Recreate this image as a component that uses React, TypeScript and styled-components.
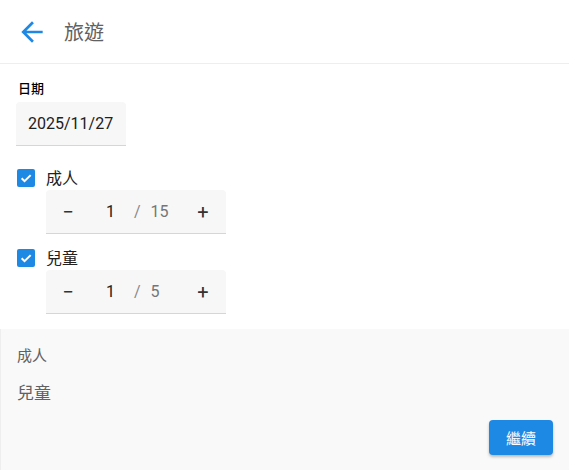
import React from "react";
import styled, { createGlobalStyle } from "styled-components";

const Global = createGlobalStyle`
  html, body { margin: 0; padding: 0; background: #fff; }
  body { font-family: Roboto, "Noto Sans CJK TC", sans-serif; color: #212121; }
`;

const Page = styled.div`
  width: 569px;
  height: 470px;
  display: flex;
  flex-direction: column;
  overflow: hidden;
`;

const Header = styled.header`
  flex: 0 0 64px;
  height: 64px;
  box-sizing: border-box;
  border-bottom: 1px solid #eeeeee;
  display: flex;
  align-items: center;
  padding-left: 16px;
  gap: 16px;
`;

const Title = styled.h1`
  margin: 0;
  font-size: 20px;
  font-weight: 400;
  color: #616161;
`;

const Form = styled.div`
  flex: 1 1 auto;
  padding: 16px 16px 0;
  display: flex;
  flex-direction: column;
`;

const Label = styled.div`
  font-size: 13px;
  font-weight: 500;
  color: #000;
  margin-left: 2px;
  line-height: 18px;
  margin-bottom: 4px;
`;

const Field = styled.div<{ $w: number }>`
  flex-shrink: 0;
  width: ${(p) => p.$w}px;
  height: 44px;
  box-sizing: border-box;
  background: #f7f7f7;
  border-radius: 4px 4px 0 0;
  border-bottom: 1px solid #d6d6d6;
  display: flex;
  align-items: center;
`;

const DateText = styled.span`
  font-size: 16px;
  padding-left: 12px;
  color: #212121;
`;

const CheckRow = styled.div<{ $top: number }>`
  flex-shrink: 0;
  display: flex;
  align-items: center;
  margin-top: ${(p) => p.$top}px;
  height: 24px;
`;

const Box = styled.span`
  width: 18px;
  height: 18px;
  border-radius: 2px;
  background: #1e88e5;
  margin-left: 1px;
  display: flex;
  align-items: center;
  justify-content: center;
`;

const CheckLabel = styled.span`
  font-size: 16px;
  margin-left: 11px;
  margin-bottom: 2px;
  color: #212121;
`;

const Stepper = styled(Field)`
  margin-left: 30px;
`;

const StepBtn = styled.span<{ $w: number }>`
  width: ${(p) => p.$w}px;
  text-align: center;
  font-size: 20px;
  color: #333;
`;

const Count = styled.span`
  font-size: 16px;
  color: #212121;
  width: 25px;
  text-align: right;
`;

const Slash = styled.span`
  font-size: 16px;
  color: #888;
  margin: 0 10px 0 19px;
`;

const Max = styled.span`
  font-size: 16px;
  color: #757575;
  flex: 1;
`;

const Summary = styled.section`
  flex: 0 0 141px;
  height: 141px;
  box-sizing: border-box;
  background: #f9f9f9;
  border-left: 1px solid #eeeeee;
  padding: 17px 16px 17px 16px;
  display: flex;
  flex-direction: column;
`;

const SumLine = styled.div<{ $size: number }>`
  font-size: ${(p) => p.$size}px;
  color: #616161;
  line-height: 20px;
  height: 20px;
  margin-bottom: 17px;
`;

const Actions = styled.div`
  margin-top: auto;
  display: flex;
  justify-content: flex-end;
`;

const Button = styled.button`
  width: 64px;
  height: 35px;
  border: none;
  border-radius: 4px;
  background: #1e88e5;
  color: #fff;
  font-family: Roboto, "Noto Sans CJK TC", sans-serif;
  font-size: 15px;
  box-shadow: 0 2px 3px rgba(0, 0, 0, 0.25);
  padding: 0;
`;

const IconSvg = styled.svg`
  flex-shrink: 0;
  display: block;
`;

const Check = () => (
  <svg width="14" height="14" viewBox="0 0 24 24">
    <path d="M4.5 12.5l5 5L20 7" fill="none" stroke="#fff" strokeWidth="3.4" />
  </svg>
);

const Arrow = () => (
  <IconSvg width="32" height="32" viewBox="0 0 24 24">
    <path d="M20 11H7.83l5.59-5.59L12 4l-8 8 8 8 1.41-1.41L7.83 13H20v-2z" fill="#1e88e5" />
  </IconSvg>
);

const StepperRow = ({ max }: { max: number }) => (
  <Stepper $w={180}>
    <StepBtn $w={44}>−</StepBtn>
    <Count>1</Count>
    <Slash>/</Slash>
    <Max>{max}</Max>
    <StepBtn $w={46}>+</StepBtn>
  </Stepper>
);

export default function App() {
  return (
    <Page>
      <Global />
      <Header>
        <Arrow />
        <Title>旅遊</Title>
      </Header>
      <Form>
        <Label>日期</Label>
        <Field $w={110}>
          <DateText>2025/11/27</DateText>
        </Field>
        <CheckRow $top={20}>
          <Box><Check /></Box>
          <CheckLabel>成人</CheckLabel>
        </CheckRow>
        <StepperRow max={15} />
        <CheckRow $top={12}>
          <Box><Check /></Box>
          <CheckLabel>兒童</CheckLabel>
        </CheckRow>
        <StepperRow max={5} />
      </Form>
      <Summary>
        <SumLine $size={15}>成人</SumLine>
        <SumLine $size={17}>兒童</SumLine>
        <Actions>
          <Button>繼續</Button>
        </Actions>
      </Summary>
    </Page>
  );
}
